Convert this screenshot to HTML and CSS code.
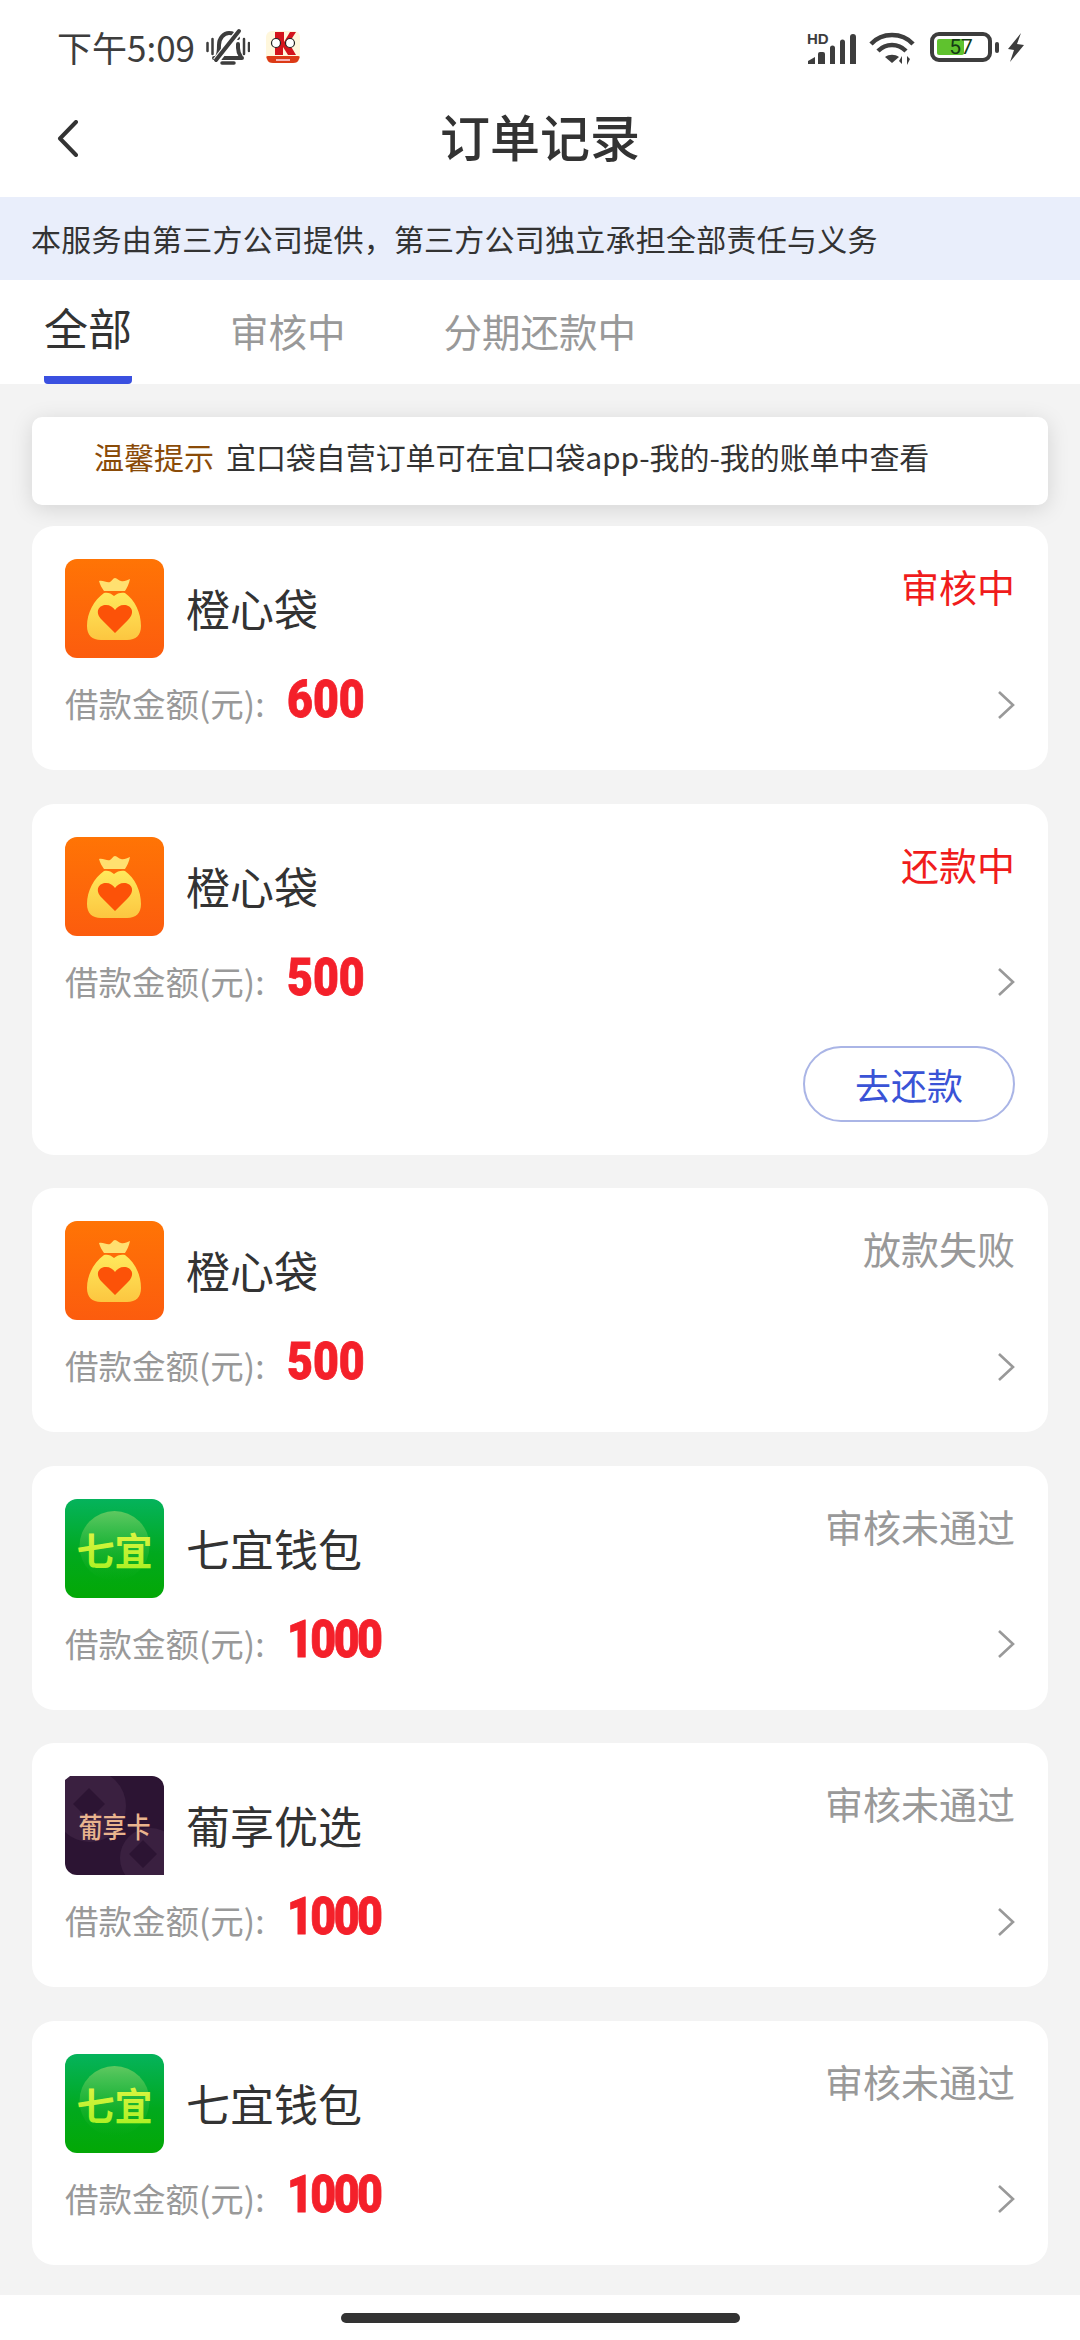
FILE: index.html
```html
<!DOCTYPE html>
<html lang="zh-CN">
<head>
<meta charset="utf-8">
<title>订单记录</title>
<link rel="stylesheet" href="styles.css">
</head>
<body>
<svg class="defs" width="0" height="0" aria-hidden="true">
  <defs>
    <linearGradient id="orangeBg" x1="0" y1="0" x2="0" y2="1"><stop offset="0" stop-color="#ff7405"/><stop offset="1" stop-color="#fc5c0e"/></linearGradient>
    <linearGradient id="bagFill" x1="0" y1="0" x2="0" y2="1"><stop offset="0" stop-color="#ffe95c"/><stop offset="1" stop-color="#fcc640"/></linearGradient>
    <linearGradient id="greenBg" x1="0" y1="0" x2="0" y2="1"><stop offset="0" stop-color="#05b35c"/><stop offset=".55" stop-color="#01a91e"/><stop offset="1" stop-color="#03a805"/></linearGradient>
    <linearGradient id="greenGlow" x1="0" y1="0" x2="0" y2="1"><stop offset="0" stop-color="#5fc860"/><stop offset="1" stop-color="#1ab42a" stop-opacity="0"/></linearGradient>
    <linearGradient id="greenText" x1="0" y1="0" x2="0" y2="1"><stop offset="0" stop-color="#eaf64a"/><stop offset="1" stop-color="#a4f01f"/></linearGradient>
    <symbol id="bagIcon" viewBox="0 0 99 99">
      <rect width="99" height="99" rx="12" fill="url(#orangeBg)"/>
      <path d="M34 22c4-1 8 2 11 1 2-1 3-4 5-4s4 3 6 3c3 1 6-1 9-2-1 5-3 9-5 12H39c-2-3-4-6-5-10z" fill="#ffe070"/>
      <path d="M39 34c3-1 7 0 10 3 3-3 8-4 11-3 10 7 16 20 16 33 0 9-5 14-14 14H36c-9 0-14-5-14-14 0-13 7-26 17-33z" fill="url(#bagFill)"/>
      <path d="M50 74L37 61c-8-8-3-15 4-15 4 0 7 2 9 5 2-3 5-5 9-5 7 0 12 7 4 15z" fill="#fc5208"/>
    </symbol>
    <symbol id="qiyiIcon" viewBox="0 0 99 99">
      <rect width="99" height="99" rx="12" fill="url(#greenBg)"/>
      <circle cx="49.500" cy="47" r="35" fill="url(#greenGlow)"/>
    </symbol>
    <symbol id="chev" viewBox="0 0 18 30">
      <path d="M2 2l14 13L2 28" fill="none" stroke="#999" stroke-width="2.600"/>
    </symbol>
  </defs>
</svg>

<div class="page">
  <header class="top">
    <div class="status">
      <div class="status-left">
        <span class="time">下午5:09</span>
        <svg class="i-bell" viewBox="0 0 44 38">
          <path d="M11 29c2-3 2-7 2-12 0-7 5-12 10-12 4 0 7 2 9 5M32 16v4c0 3 1 6 3 9M8 30h28" fill="none" stroke="#3d3d3d" stroke-width="4" stroke-linecap="round"/>
          <path d="M10 33L34 2" stroke="#fff" stroke-width="7"/>
          <path d="M10 32L33 3" stroke="#3d3d3d" stroke-width="4" stroke-linecap="round"/>
          <path d="M1.500 15v8M6.500 11v15M38 11v15M43 15v8" stroke="#3d3d3d" stroke-width="2.500" stroke-linecap="round"/>
          <path d="M16 35h12" stroke="#3d3d3d" stroke-width="3.500" stroke-linecap="round"/>
        </svg>
        <svg class="i-app" viewBox="0 0 34 32">
          <rect width="34" height="32" rx="6" fill="#fff7dc"/>
          <path d="M9 1h9v10l6-10h6l-7 11 7 12h-8l-5-8v8H9z" fill="#d3141c"/>
          <circle cx="10" cy="12" r="4.500" fill="#fff" stroke="#222" stroke-width="1.200"/>
          <circle cx="24" cy="12" r="4.500" fill="#fff" stroke="#222" stroke-width="1.200"/>
          <path d="M2 25h30c2 0 2 1 1 3-1 3-3 4-6 4H7c-3 0-5-1-6-4-1-2-1-3 1-3z" fill="#dc3a16"/>
          <path d="M10 29h14" stroke="#fde" stroke-width="1.500"/>
        </svg>
      </div>
      <div class="status-right">
        <svg class="i-signal" viewBox="0 0 50 33">
          <text x="1" y="13" class="hd">HD</text>
          <path d="M2 33v-3l7-4v7zM12 33V23a2 2 0 0 1 2-2h3a2 2 0 0 1 2 2v10zM24 33V17a2.500 2.500 0 0 1 5 0v16zM34 33V11a2.500 2.500 0 0 1 5 0v22zM44 33V6a3 3 0 0 1 6 0v27z" fill="#3d3d3d"/>
        </svg>
        <svg class="i-wifi" viewBox="0 0 46 35">
          <path d="M2 14C13 2 33 2 44 14M9 21c8-8 20-8 28 0" fill="none" stroke="#3d3d3d" stroke-width="4.500"/>
          <path d="M16 27c4-3 10-3 14 0l-7 6z" fill="#3d3d3d"/>
          <path d="M33 26v8l-3-3zM38 35v-9l3 3z" fill="#3d3d3d"/>
        </svg>
        <div class="battery">
          <div class="batt-body">
            <div class="batt-fill"></div>
            <span class="batt-num">57</span>
          </div>
          <div class="batt-nub"></div>
        </div>
        <svg class="i-bolt" viewBox="0 0 19 29"><path d="M15 0L2 16l6 1-4 12 14-17-7-1z" fill="#3d3d3d"/></svg>
      </div>
    </div>
    <nav class="nav">
      <div class="nav-back">
        <svg class="i-back" viewBox="0 0 21 37"><path d="M19 2L3 18.500 19 35" fill="none" stroke="#333" stroke-width="4" stroke-linecap="round" stroke-linejoin="round"/></svg>
      </div>
      <h1 class="title">订单记录</h1>
      <div></div>
    </nav>
  </header>

  <div class="notice">本服务由第三方公司提供，第三方公司独立承担全部责任与义务</div>

  <div class="tabs">
    <div class="tab tab-on">全部</div>
    <div class="tab">审核中</div>
    <div class="tab">分期还款中</div>
  </div>

  <main class="list">
    <div class="tip"><span class="tip-key">温馨提示</span><span class="tip-text">宜口袋自营订单可在宜口袋app-我的-我的账单中查看</span></div>

    <div class="cards">
      <article class="card">
        <div class="head">
          <svg class="logo"><use href="#bagIcon"/></svg>
          <div class="name">橙心袋</div>
          <div class="state state-red">审核中</div>
        </div>
        <div class="info">
          <span class="label">借款金额(元):</span><span class="amount">600</span>
          <svg class="chevron"><use href="#chev"/></svg>
        </div>
      </article>

      <article class="card">
        <div class="head">
          <svg class="logo"><use href="#bagIcon"/></svg>
          <div class="name">橙心袋</div>
          <div class="state state-red">还款中</div>
        </div>
        <div class="info">
          <span class="label">借款金额(元):</span><span class="amount">500</span>
          <svg class="chevron"><use href="#chev"/></svg>
        </div>
        <div class="actions"><button class="repay">去还款</button></div>
      </article>

      <article class="card">
        <div class="head">
          <svg class="logo"><use href="#bagIcon"/></svg>
          <div class="name">橙心袋</div>
          <div class="state">放款失败</div>
        </div>
        <div class="info">
          <span class="label">借款金额(元):</span><span class="amount">500</span>
          <svg class="chevron"><use href="#chev"/></svg>
        </div>
      </article>

      <article class="card">
        <div class="head">
          <svg class="logo" viewBox="0 0 99 99"><use href="#qiyiIcon"/><text x="49.500" y="66" class="logo-qiyi" fill="url(#greenText)">七宜</text></svg>
          <div class="name">七宜钱包</div>
          <div class="state">审核未通过</div>
        </div>
        <div class="info">
          <span class="label">借款金额(元):</span><span class="amount amount-k">1000</span>
          <svg class="chevron"><use href="#chev"/></svg>
        </div>
      </article>

      <article class="card">
        <div class="head">
          <svg class="logo" viewBox="0 0 99 99">
            <rect width="99" height="99" rx="12" fill="#2c1433"/>
            <circle cx="25" cy="30" r="36" fill="#3a2040"/>
            <circle cx="85" cy="82" r="30" fill="#3a2040"/>
            <path d="M24 12l16 16-16 16L8 28zM78 64l14 14-14 14-14-14z" fill="#2c1433"/>
            <text x="0" y="62" class="logo-pu" transform="translate(49.500 0) scale(.86 1)">葡享卡</text>
          </svg>
          <div class="name">葡享优选</div>
          <div class="state">审核未通过</div>
        </div>
        <div class="info">
          <span class="label">借款金额(元):</span><span class="amount amount-k">1000</span>
          <svg class="chevron"><use href="#chev"/></svg>
        </div>
      </article>

      <article class="card">
        <div class="head">
          <svg class="logo" viewBox="0 0 99 99"><use href="#qiyiIcon"/><text x="49.500" y="66" class="logo-qiyi" fill="url(#greenText)">七宜</text></svg>
          <div class="name">七宜钱包</div>
          <div class="state">审核未通过</div>
        </div>
        <div class="info">
          <span class="label">借款金额(元):</span><span class="amount amount-k">1000</span>
          <svg class="chevron"><use href="#chev"/></svg>
        </div>
      </article>
    </div>
  </main>

  <footer class="home"><div class="home-bar"></div></footer>
</div>
</body>
</html>
```
FILE: styles.css
```css
* { box-sizing: border-box; }
html, body { margin: 0; padding: 0; }
body {
  width: 1080px;
  height: 2340px;
  overflow: hidden;
  background: #fff;
  color: #333;
  font-family: "Noto Sans CJK SC", "Noto Sans", sans-serif;
}
.defs { position: absolute; }
.page { display: flex; flex-direction: column; height: 2340px; }

/* top */
.top { height: 197px; display: flex; flex-direction: column; }
.status {
  height: 80px;
  padding: 14px 55px 0 57px;
  display: flex;
  justify-content: space-between;
  align-items: center;
}
.status-left, .status-right { display: flex; align-items: center; }
.time { font-size: 35px; line-height: 44px; color: #3d3d3d; }
.i-bell { width: 44px; height: 38px; margin-left: 11px; }
.i-app { width: 34px; height: 32px; margin-left: 16px; }
.i-signal { width: 50px; height: 33px; }
.hd { font: 700 15px "Liberation Sans", sans-serif; fill: #3d3d3d; }
.i-wifi { width: 46px; height: 35px; margin-left: 13px; }
.battery { display: flex; align-items: center; margin-left: 15px; }
.batt-body {
  width: 62px;
  height: 30px;
  border: 4px solid #3d3d3d;
  border-radius: 9px;
  display: flex;
  align-items: center;
  justify-content: center;
  position: relative;
}
.batt-fill { position: absolute; left: 3px; top: 3px; bottom: 3px; width: 27px; background: #5fc22e; border-radius: 2px; }
.batt-num { position: relative; font: 21px/22px "Roboto", sans-serif; color: #143a14; }
.batt-nub { width: 4px; height: 11px; margin-left: 3px; background: #3d3d3d; border-radius: 2px; }
.i-bolt { width: 19px; height: 29px; margin-left: 7px; }

.nav { flex: 1; display: grid; grid-template-columns: 1fr auto 1fr; align-items: center; }
.nav-back { padding-left: 57px; display: flex; }
.i-back { width: 21px; height: 37px; }
.title { margin: 0 0 8px; font-size: 50px; line-height: 64px; font-weight: 500; color: #333; }

/* notice + tabs */
.notice {
  height: 83px;
  background: #e9eefb;
  padding-left: 31px;
  font-size: 30px;
  letter-spacing: .24px;
  line-height: 83px;
  color: #333;
}
.tabs { height: 104px; display: flex; padding-left: 44px; gap: 98px; }
.tab { font-size: 38.500px; line-height: 100px; color: #999; height: 104px; }
.tab-on { width: 88px; text-align: center; font-size: 44px; line-height: 95px; color: #333; border-bottom: 8px solid #3a50e0; border-radius: 0 0 4px 4px; white-space: nowrap; }

/* list */
.list { flex: 1; background: #f3f3f3; padding: 33px 32px 0; overflow: hidden; min-height: 0; }
.tip {
  height: 88px;
  margin-bottom: 21px;
  padding: 0 0 10px 62px;
  background: #fff;
  border-radius: 10px;
  box-shadow: 0 4px 22px rgba(0, 0, 0, .13);
  display: flex;
  align-items: center;
  gap: 12px;
  font-size: 30px;
  line-height: 40px;
  color: #333;
}
.tip-key { color: #8a4b08; }
.tip-text { letter-spacing: -.07px; }
.cards { display: flex; flex-direction: column; gap: 33.500px; }
.card { background: #fff; border-radius: 22px; padding: 33px 33px 30px; display: flex; flex-direction: column; }
.head { display: flex; align-items: flex-start; height: 99px; }
.logo { width: 99px; height: 99px; flex: none; }
.logo-qiyi { font: 700 38px "Noto Sans CJK SC", sans-serif; text-anchor: middle; }
.logo-pu { font: 500 28px "Noto Sans CJK SC", sans-serif; text-anchor: middle; fill: #e9b48e; }
.name { margin-left: 22px; font-size: 44px; line-height: 60px; margin-top: 19px; color: #333; }
.state { margin-left: auto; font-size: 38px; line-height: 50px; margin-top: 2px; color: #999; }
.state-red { color: #f01c1c; }
.info { height: 70px; margin-top: 12px; display: flex; align-items: baseline; padding-top: 7px; }
.label { font-size: 33.500px; line-height: 46px; color: #999; }
.amount {
  display: inline-block;
  width: 120px;
  margin-left: 23px;
  font: 900 52px/46px "Roboto", sans-serif;
  color: #f4202a;
  -webkit-text-stroke: .8px #f4202a;
  transform: scaleX(.86);
  transform-origin: left center;
}
.amount-k { letter-spacing: -3px; }
.chevron { width: 18px; height: 30px; margin: 0 0 8px auto; align-self: center; }
.actions { display: flex; justify-content: flex-end; margin: 28px 0 3px; }
.repay {
  width: 212px;
  height: 76px;
  border: 2px solid #aab5e6;
  border-radius: 38px;
  background: #fff;
  color: #3a53d6;
  font: 36px/1 "Noto Sans CJK SC", sans-serif;
  padding: 0;
}

/* home */
.home { height: 45px; background: #fff; padding-top: 18px; display: flex; justify-content: center; }
.home-bar { width: 399px; height: 10px; border-radius: 5px; background: #333; }
```
